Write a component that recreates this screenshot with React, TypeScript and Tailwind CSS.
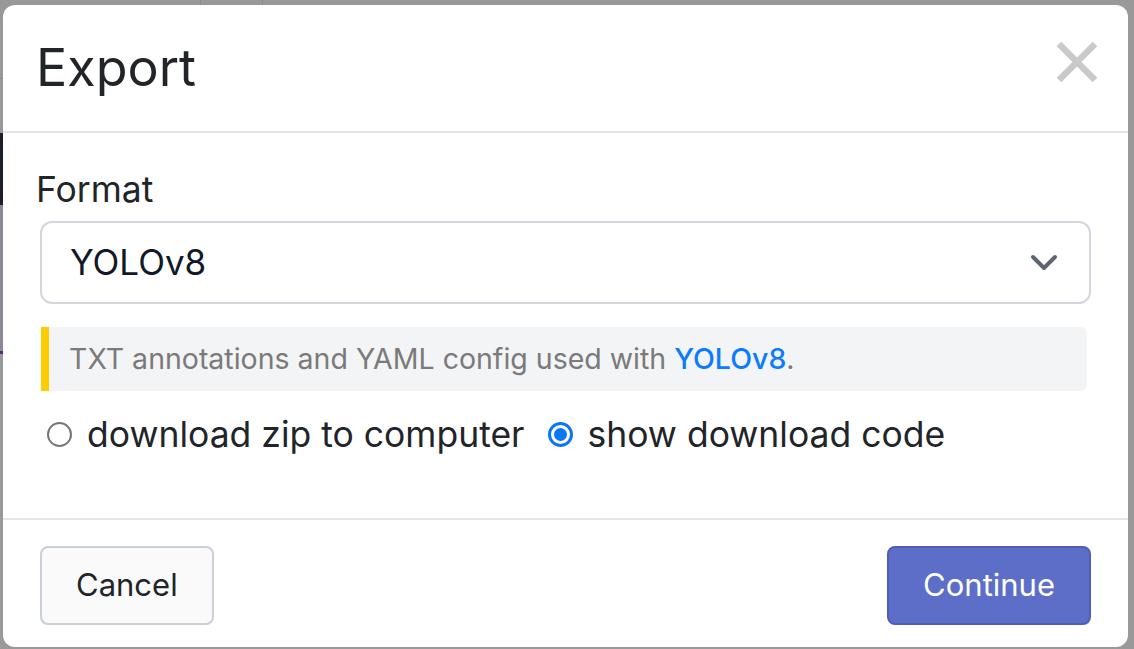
import React, { useState } from 'react';

function Radio({ checked }: { checked: boolean }) {
  return checked ? (
    <span className="w-[25px] h-[25px] rounded-full border-[3px] border-[#0b76f5] flex items-center justify-center shrink-0">
      <span className="w-[13px] h-[13px] rounded-full bg-[#0b76f5]" />
    </span>
  ) : (
    <span className="w-[25px] h-[25px] rounded-full border-2 border-[#767676] bg-white shrink-0" />
  );
}

export default function App() {
  const [mode, setMode] = useState<'zip' | 'code'>('code');

  return (
    <div className="relative w-[1134px] h-[649px] overflow-hidden bg-[#999999] font-['Inter','Liberation_Sans',sans-serif]">
      {/* faint page behind the overlay */}
      <div className="absolute left-0 top-[78px] w-[4px] h-px bg-[#8a8a8a]" />
      <div className="absolute left-0 top-[133px] w-[4px] h-[72px] bg-[#1c2127]" />
      <div className="absolute left-0 top-[205px] w-[4px] h-[146px] bg-[#8d8797]" />
      <div className="absolute left-0 top-[351px] w-[4px] h-[3px] bg-[#5a2a8a]" />
      <div className="absolute left-[200px] top-0 w-px h-[5px] bg-[#8a8a8a]" />
      <div className="absolute left-[262px] top-0 w-px h-[5px] bg-[#8a8a8a]" />

      {/* modal */}
      <div className="absolute left-[3px] top-[5px] w-[1125px] h-[642px] bg-white rounded-[12px] flex flex-col">
        <div className="h-[128px] pl-[33px] pr-[29px] flex items-center justify-between border-b-2 border-[#e2e5e9]">
          <h1 className="text-[52px] leading-none font-normal text-[#212529]">Export</h1>
          <button className="w-[44px] h-[44px] flex items-center justify-center mb-[12px]">
            <svg width="42" height="42" viewBox="0 0 42 42">
              <path d="M3 3 L39 39 M39 3 L3 39" stroke="#c9c9c9" strokeWidth="6.5" strokeLinecap="butt" />
            </svg>
          </button>
        </div>

        <div className="flex-1 px-[37px] pt-[37px]">
          <label className="block -ml-[4px] text-[35.5px] leading-[40px] text-[#212529]">Format</label>
          <div className="mt-[11px] h-[83px] rounded-[12px] border-2 border-[#d3d7dd] flex items-center justify-between pl-[28px] pr-[31px]">
            <span className="text-[35px] text-[#111827]">YOLOv8</span>
            <svg width="28" height="18" viewBox="0 0 28 18">
              <path d="M3 3 L14 14 L25 3" fill="none" stroke="#5f6570" strokeWidth="4" strokeLinecap="round" strokeLinejoin="round" />
            </svg>
          </div>

          <div className="mt-[23px] ml-px mr-[4px] h-[64px] flex items-center bg-[#f3f4f6] border-l-[8px] border-[#ffcc00] rounded-r-[6px] pl-[20px]">
            <span className="text-[28.5px] text-[#7a7a7a]">
              TXT annotations and YAML config used with <a className="text-[#0a7cff] font-medium">YOLOv8</a>.
            </span>
          </div>

          <div className="mt-[17px] flex items-center pl-[7px] text-[35.5px] text-[#212529]">
            <label className="flex items-center gap-[15px] cursor-pointer" onClick={() => setMode('zip')}>
              <Radio checked={mode === 'zip'} />
              <span>download zip to computer</span>
            </label>
            <label className="flex items-center gap-[14px] ml-[24px] cursor-pointer" onClick={() => setMode('code')}>
              <Radio checked={mode === 'code'} />
              <span>show download code</span>
            </label>
          </div>
        </div>

        <div className="h-[129px] border-t-2 border-[#e2e5e9] px-[37px] pt-[26px] flex items-start justify-between">
          <button className="h-[79px] px-[34px] rounded-[8px] border-2 border-[#c9d0da] bg-[#fafafa] text-[31px] text-[#212529]">
            Cancel
          </button>
          <button className="h-[79px] px-[34px] rounded-[8px] border-2 border-[#4f5dbb] bg-[#5d6ec8] text-[31px] text-white">
            Continue
          </button>
        </div>
      </div>
    </div>
  );
}
